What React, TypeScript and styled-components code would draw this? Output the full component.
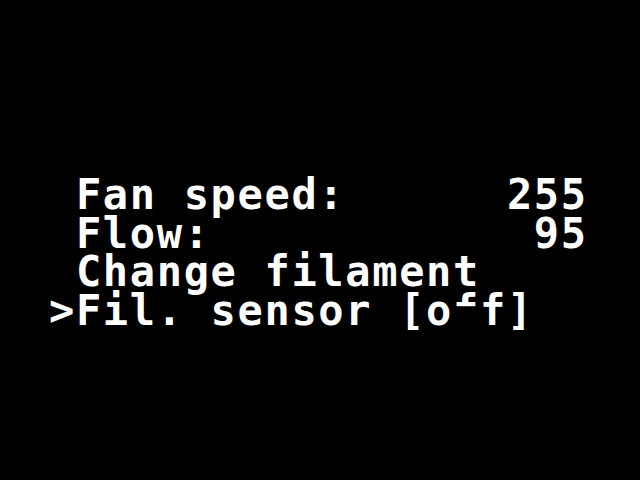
import React from "react";
import styled, { createGlobalStyle } from "styled-components";

const Global = createGlobalStyle`
  html, body { margin: 0; padding: 0; background: #000; }
  #root { width: 640px; height: 480px; }
`;

const Screen = styled.div`
  width: 640px;
  height: 480px;
  background: #000;
  box-sizing: border-box;
  padding: 176px 0 0 49px;
`;

const Display = styled.div`
  display: flex;
  flex-direction: column;
`;

const Line = styled.div`
  white-space: pre;
  font-family: "DejaVu Sans Mono", "Liberation Mono", monospace;
  font-weight: bold;
  font-size: 42px;
  line-height: 38.5px;
  height: 38.5px;
  letter-spacing: 1.65px;
  color: #fff;
`;

const Glitch = styled.span<{ $cut: number }>`
  display: inline-block;
  clip-path: inset(0 0 ${(p) => p.$cut}% 0);
`;

const rows = [
  " Fan speed:      255",
  " Flow:            95",
  " Change filament",
];

export default function App() {
  return (
    <>
      <Global />
      <Screen>
        <Display>
          {rows.map((r, i) => (
            <Line key={i}>{r}</Line>
          ))}
          <Line>
            {">Fil. sensor "}
            [o<Glitch $cut={62}>f</Glitch>f]
          </Line>
        </Display>
      </Screen>
    </>
  );
}
